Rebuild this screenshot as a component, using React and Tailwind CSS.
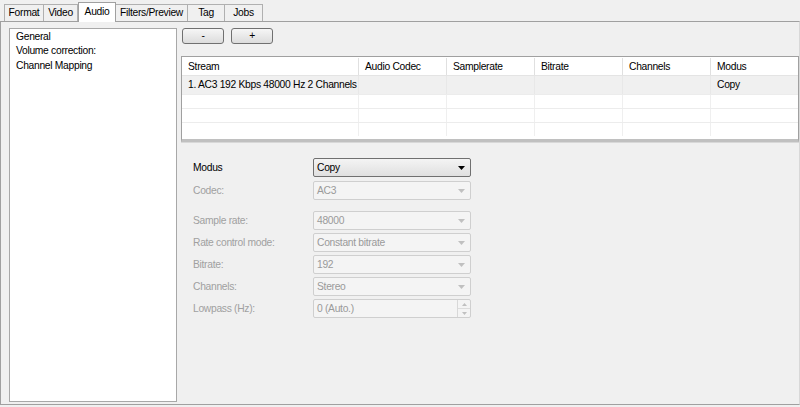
import React from "react";

const tabs = ["Format", "Video", "Audio", "Filters/Preview", "Tag", "Jobs"];
const tabWidths = [40, 34, 38, 72, 37, 38];

const columns = [
  { name: "Stream", w: 177 },
  { name: "Audio Codec", w: 88 },
  { name: "Samplerate", w: 88 },
  { name: "Bitrate", w: 88 },
  { name: "Channels", w: 88 },
  { name: "Modus", w: 88 },
];

const fields = [
  { label: "Codec:", value: "AC3", mt: "mt-[4px]" },
  { label: "Sample rate:", value: "48000", mt: "mt-[11px]" },
  { label: "Rate control mode:", value: "Constant bitrate", mt: "mt-[3px]" },
  { label: "Bitrate:", value: "192", mt: "mt-[3px]" },
  { label: "Channels:", value: "Stereo", mt: "mt-[3px]" },
];

function Arrow({ color }) {
  return (
    <svg width="7" height="4" viewBox="0 0 7 4">
      <path d="M0 0 L7 0 L3.5 4 Z" fill={color} />
    </svg>
  );
}

export default function App() {
  return (
    <div
      className="w-[800px] h-[407px] bg-[#f0f0f0] text-[10.3px] tracking-[-0.3px] text-black overflow-hidden whitespace-nowrap"
      style={{ fontFamily: '"Liberation Sans", Arial, sans-serif' }}
    >
      {/* tab bar */}
      <div className="flex items-end h-[21px] pl-[4px]">
        {tabs.map((t, i) => (
          <div
            key={t}
            style={{ width: tabWidths[i] }}
            className={
              t === "Audio"
                ? "h-[20px] -mb-px z-10 bg-white border border-b-0 border-[#a0a0a0] flex items-center justify-center pb-[2px]"
                : "h-[17px] bg-[#f0f0f0] border border-b-0 border-l-0 first:border-l border-[#b0b0b0] flex items-center justify-center"
            }
          >
            {t}
          </div>
        ))}
      </div>

      {/* tab pane */}
      <div className="h-[384px] w-[800px] border border-[#a0a0a0] border-r-[#d8d8d8] flex pl-[8px] pt-[6px] pb-[2px]">
        {/* left list */}
        <div className="w-[168px] h-[374px] bg-white border border-[#a8a8a8] px-[6px] pt-[1px] leading-[14px] shrink-0">
          <div>General</div>
          <div>Volume correction:</div>
          <div className="mt-px">Channel Mapping</div>
        </div>

        {/* right side */}
        <div className="flex flex-col ml-[4px] flex-1 min-w-0">
          <div className="flex gap-[7px] ml-px">
            {["-", "+"].map((b) => (
              <div
                key={b}
                className="w-[42px] h-[16px] border border-[#707070] rounded-[3px] bg-gradient-to-b from-[#f6f6f6] to-[#dcdcdc] flex items-center justify-center leading-none"
              >
                {b}
              </div>
            ))}
          </div>

          {/* table */}
          <div className="mt-[12px] h-[86px] w-[618px] border border-[#a0a0a0] border-b-[3px] border-b-[#c0c0c0] bg-white overflow-hidden">
            <div className="flex h-[18px] border-b border-[#e4e4e4] mt-px">
              {columns.map((c) => (
                <div
                  key={c.name}
                  style={{ width: c.w }}
                  className="border-r border-[#e0e0e0] px-[6px] flex items-center shrink-0"
                >
                  {c.name}
                </div>
              ))}
            </div>
            <div className="flex h-[18px] bg-[#f0f0f0]">
              {columns.map((c, i) => (
                <div
                  key={c.name}
                  style={{ width: c.w }}
                  className="border-r border-[#e8e8e8] px-[6px] flex items-center shrink-0 overflow-hidden"
                >
                  {i === 0 ? "1. AC3 192 Kbps 48000 Hz 2 Channels" : i === 5 ? "Copy" : ""}
                </div>
              ))}
            </div>
            {[0, 1, 2].map((r) => (
              <div key={r} className="flex h-[14px] border-t border-[#ececec]">
                {columns.map((c) => (
                  <div
                    key={c.name}
                    style={{ width: c.w }}
                    className="border-r border-[#efefef] shrink-0"
                  />
                ))}
              </div>
            ))}
          </div>

          {/* splitter */}
          <div className="h-[3px] w-[619px] border-t border-[#d8d8d8]" />

          {/* form */}
          <div className="pl-[12px] pt-[13px] flex flex-col">
            <div className="flex items-center">
              <div className="w-[120px]">Modus</div>
              <div className="w-[158px] h-[19px] border border-[#707070] rounded-[2px] bg-gradient-to-b from-[#f4f4f4] to-[#e0e0e0] flex items-center justify-between pl-[3px] pr-[5px]">
                <span>Copy</span>
                <Arrow color="#000" />
              </div>
            </div>
            {fields.map((f) => (
              <div key={f.label} className={`flex items-center ${f.mt}`}>
                <div className="w-[120px] text-[#a0a0a0]">{f.label}</div>
                <div className="w-[158px] h-[19px] border border-[#cfcfcf] rounded-[2px] bg-[#f4f4f4] flex items-center justify-between pl-[3px] pr-[5px] text-[#9a9a9a]">
                  <span>{f.value}</span>
                  <Arrow color="#c0c0c0" />
                </div>
              </div>
            ))}
            <div className="flex items-center mt-[3px]">
              <div className="w-[120px] text-[#a0a0a0]">Lowpass (Hz):</div>
              <div className="w-[158px] h-[19px] border border-[#cfcfcf] rounded-[2px] bg-[#f4f4f4] flex items-center justify-between pl-[3px] text-[#9a9a9a]">
                <span>0 (Auto.)</span>
                <div className="w-[13px] h-full border-l border-[#d8d8d8] flex flex-col">
                  <div className="flex-1 border-b border-[#dcdcdc] flex items-center justify-center">
                    <svg width="5" height="3" viewBox="0 0 5 3">
                      <path d="M0 3 L5 3 L2.5 0 Z" fill="#c0c0c0" />
                    </svg>
                  </div>
                  <div className="flex-1 flex items-center justify-center">
                    <svg width="5" height="3" viewBox="0 0 5 3">
                      <path d="M0 0 L5 0 L2.5 3 Z" fill="#c0c0c0" />
                    </svg>
                  </div>
                </div>
              </div>
            </div>
          </div>
        </div>
      </div>
    </div>
  );
}
